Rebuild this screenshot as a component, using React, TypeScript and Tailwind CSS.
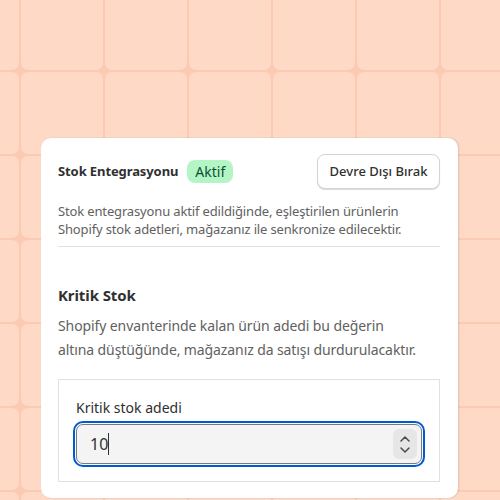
import React from "react";

export default function App() {
  return (
    <div
      className="relative w-[500px] h-[500px] overflow-hidden bg-[#fccab3]"
      style={{ fontFamily: '"Noto Sans", "Open Sans", sans-serif' }}
    >
      <svg className="absolute inset-0" width="500" height="500">
        <defs>
          <pattern id="tiles" patternUnits="userSpaceOnUse" x="21" y="72" width="84" height="84">
            <rect x="0" y="0" width="82" height="82" rx="7" fill="#fdd9c6" />
          </pattern>
        </defs>
        <rect width="500" height="500" fill="url(#tiles)" />
      </svg>

      <div className="relative mt-[138px] ml-[41px] w-[417px] h-[360px] rounded-[10px] bg-white shadow-[1px_0_2px_rgba(0,0,0,0.12)] px-[17px] pt-4">
        <div className="flex items-center justify-between h-[35px] pr-px">
          <div className="flex items-center gap-[9px]">
            <span className="text-[13px] font-bold text-[#303030] tracking-[-0.1px]">Stok Entegrasyonu</span>
            <span className="h-[23px] px-2 flex items-center rounded-lg bg-[#b4f5c6] text-[14px] text-[#0c5132]">
              Aktif
            </span>
          </div>
          <button className="h-[35px] w-[123px] rounded-lg border border-[#d4d4d4] bg-white shadow-[0_1px_1px_rgba(0,0,0,0.15)] text-[13px] font-medium text-[#303030]">
            Devre Dışı Bırak
          </button>
        </div>
        <p className="mt-[13px] text-[13px] leading-[18px] text-[#616161] tracking-[-0.15px]">
          Stok entegrasyonu aktif edildiğinde, eşleştirilen ürünlerin
          <br />
          Shopify stok adetleri, mağazanız ile senkronize edilecektir.
        </p>
        <div className="mt-[8px] h-px bg-[#e3e3e3] mr-px" />

        <div className="mt-[38px] text-[15px] font-bold text-[#303030] leading-[20px] tracking-[-0.1px]">Kritik Stok</div>
        <p className="mt-[9px] text-[14px] leading-[24px] text-[#616161] tracking-[-0.1px]">
          Shopify envanterinde kalan ürün adedi bu değerin
          <br />
          altına düştüğünde, mağazanız da satışı durdurulacaktır.
        </p>

        <div className="mt-[17px] border border-[#e1e1e1] mr-px h-[103px] px-[17px] pt-[18px]">
          <div className="text-[14px] leading-[20px] text-[#303030]">Kritik stok adedi</div>
          <div className="mt-[6px] h-[40px] rounded-[7px] border border-[#7a7a7a] bg-[#f4f4f4] outline-2 outline-[#005bd3] outline-offset-1 flex items-center justify-between pl-[13px] pr-[4px]">
            <div className="flex items-center text-[16px] text-[#303030]">
              <span>10</span>
              <span className="w-px h-[22px] bg-[#303030]" />
            </div>
            <div className="w-[24px] h-[30px] rounded-md bg-[#e6e6e6] flex flex-col items-center justify-center gap-[3px]">
              <svg width="12" height="8" viewBox="0 0 12 8" fill="none">
                <path d="M2 6l4-4 4 4" stroke="#4a4a4a" strokeWidth="1.5" strokeLinecap="round" strokeLinejoin="round" />
              </svg>
              <svg width="12" height="8" viewBox="0 0 12 8" fill="none">
                <path d="M2 2l4 4 4-4" stroke="#4a4a4a" strokeWidth="1.5" strokeLinecap="round" strokeLinejoin="round" />
              </svg>
            </div>
          </div>
        </div>
      </div>
    </div>
  );
}
